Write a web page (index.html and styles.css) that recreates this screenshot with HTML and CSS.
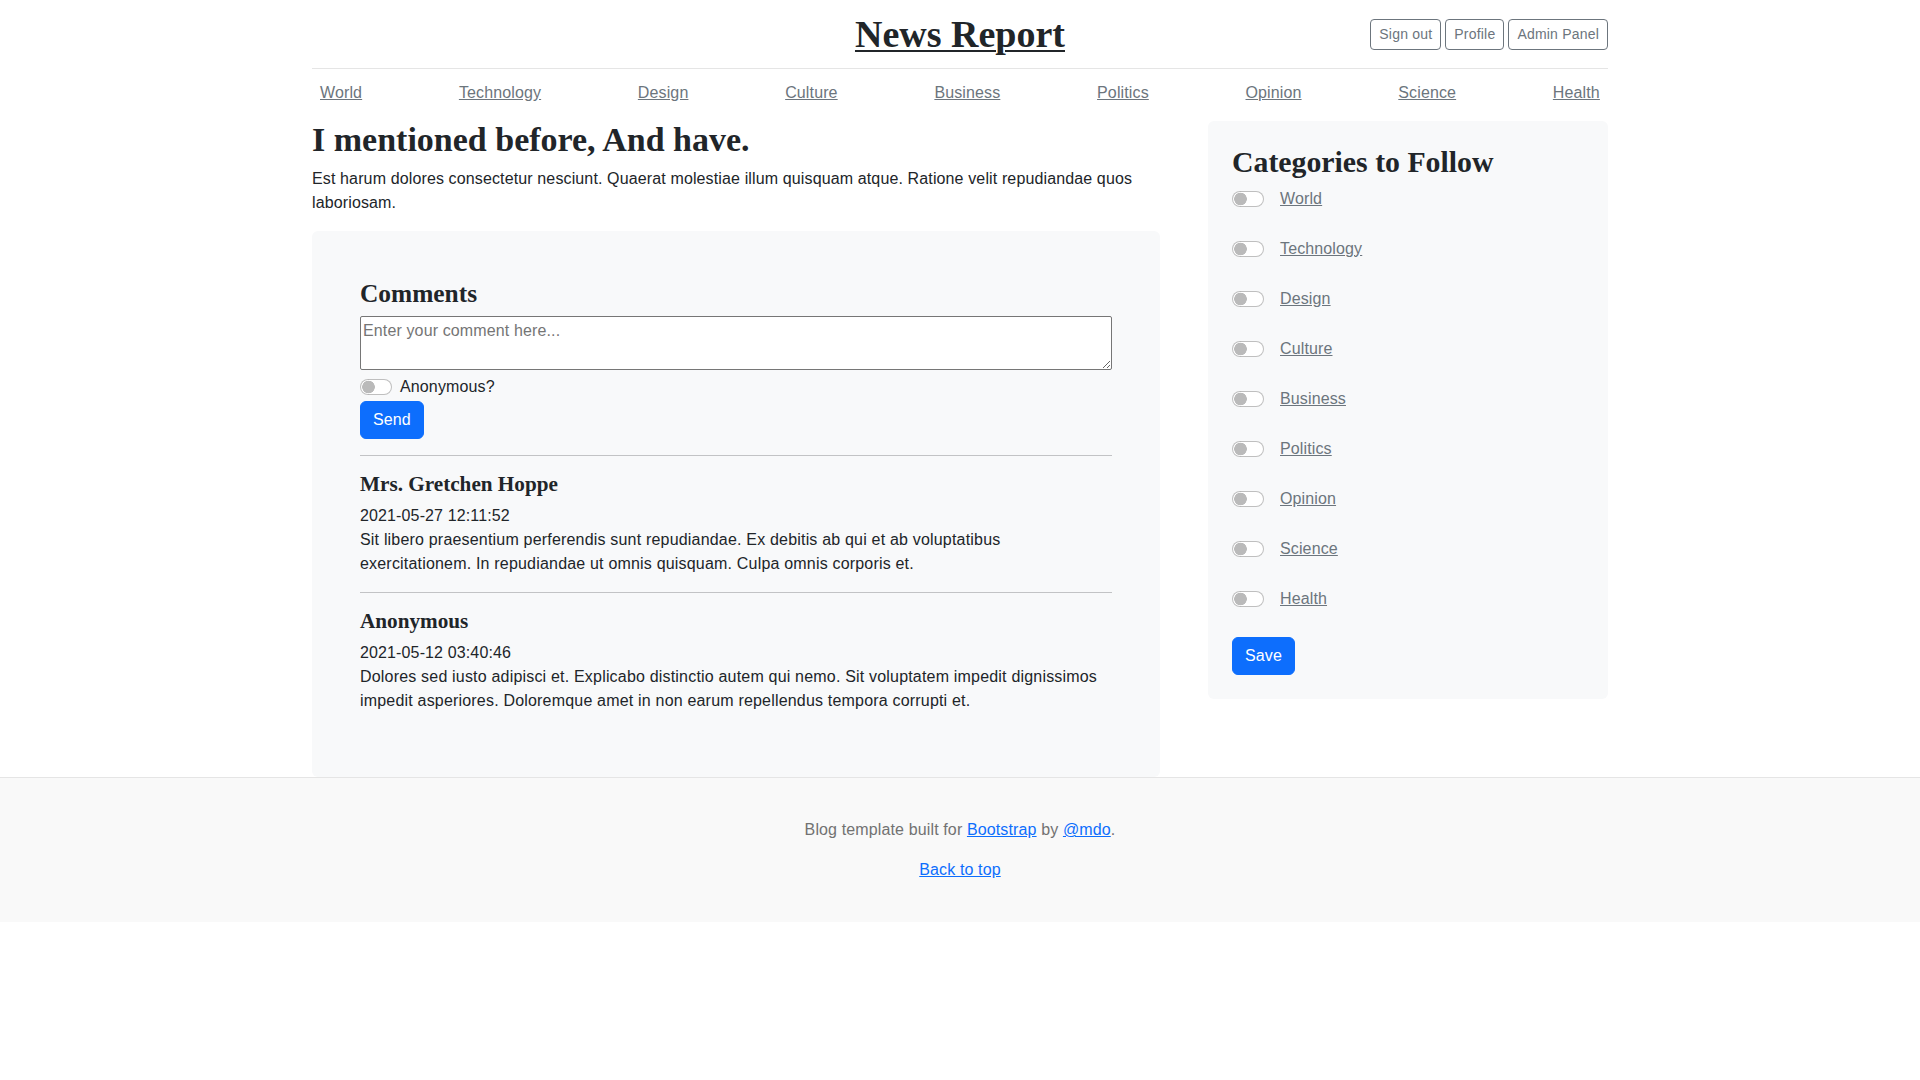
FILE: index.html
```html
<!DOCTYPE html>
<html lang="en">
<head>
<meta charset="utf-8">
<title>News Report</title>
<link rel="stylesheet" href="styles.css">
</head>
<body>
<div class="container">
  <header class="blog-header">
    <div class="header-row">
      <div class="header-side"></div>
      <div class="header-center"><a class="blog-logo" href="#">News Report</a></div>
      <div class="header-side header-actions">
        <a class="btn-sm" href="#">Sign out</a>
        <a class="btn-sm" href="#">Profile</a>
        <a class="btn-sm" href="#">Admin Panel</a>
      </div>
    </div>
  </header>

  <div class="nav-scroller">
    <nav class="nav">
      <a href="#">World</a>
      <a href="#">Technology</a>
      <a href="#">Design</a>
      <a href="#">Culture</a>
      <a href="#">Business</a>
      <a href="#">Politics</a>
      <a href="#">Opinion</a>
      <a href="#">Science</a>
      <a href="#">Health</a>
    </nav>
  </div>

  <div class="main-grid">
    <main class="main-col">
      <h2 class="post-title">I mentioned before, And have.</h2>
      <p class="post-body">Est harum dolores consectetur nesciunt. Quaerat molestiae illum quisquam atque. Ratione velit repudiandae quos laboriosam.</p>

      <section class="comments-box">
        <h4 class="comments-title">Comments</h4>
        <textarea class="comment-input" placeholder="Enter your comment here..."></textarea>
        <div class="switch-row anon-row">
          <input type="checkbox" class="switch" id="anon">
          <label for="anon">Anonymous?</label>
        </div>
        <button class="btn-primary" type="button">Send</button>

        <hr>
        <div class="comment">
          <h5 class="comment-author">Mrs. Gretchen Hoppe</h5>
          <div class="comment-date">2021-05-27 12:11:52</div>
          <p class="comment-text">Sit libero praesentium perferendis sunt repudiandae. Ex debitis ab qui et ab voluptatibus exercitationem. In repudiandae ut omnis quisquam. Culpa omnis corporis et.</p>
        </div>
        <hr>
        <div class="comment">
          <h5 class="comment-author">Anonymous</h5>
          <div class="comment-date">2021-05-12 03:40:46</div>
          <p class="comment-text">Dolores sed iusto adipisci et. Explicabo distinctio autem qui nemo. Sit voluptatem impedit dignissimos impedit asperiores. Doloremque amet in non earum repellendus tempora corrupti et.</p>
        </div>
      </section>
    </main>

    <aside class="sidebar">
      <h3 class="sidebar-title">Categories to Follow</h3>
      <form class="cat-form">
        <div class="switch-row cat-row"><input type="checkbox" class="switch" id="c1"><a href="#">World</a></div>
        <div class="switch-row cat-row"><input type="checkbox" class="switch" id="c2"><a href="#">Technology</a></div>
        <div class="switch-row cat-row"><input type="checkbox" class="switch" id="c3"><a href="#">Design</a></div>
        <div class="switch-row cat-row"><input type="checkbox" class="switch" id="c4"><a href="#">Culture</a></div>
        <div class="switch-row cat-row"><input type="checkbox" class="switch" id="c5"><a href="#">Business</a></div>
        <div class="switch-row cat-row"><input type="checkbox" class="switch" id="c6"><a href="#">Politics</a></div>
        <div class="switch-row cat-row"><input type="checkbox" class="switch" id="c7"><a href="#">Opinion</a></div>
        <div class="switch-row cat-row"><input type="checkbox" class="switch" id="c8"><a href="#">Science</a></div>
        <div class="switch-row cat-row"><input type="checkbox" class="switch" id="c9"><a href="#">Health</a></div>
        <button class="btn-primary" type="button">Save</button>
      </form>
    </aside>
  </div>
</div>

<footer class="blog-footer">
  <p class="footer-line">Blog template built for <a href="#">Bootstrap</a> by <a href="#">@mdo</a>.</p>
  <p class="footer-line last"><a href="#">Back to top</a></p>
</footer>
</body>
</html>
```
FILE: styles.css
```css
*, *::before, *::after {
  box-sizing: border-box;
}

body {
  margin: 0;
  font-family: "Liberation Sans", Arial, sans-serif;
  font-size: 16px;
  line-height: 1.5;
  letter-spacing: 0.13px;
  color: #212529;
  background: #fff;
}

.container {
  width: 1320px;
  margin: 0 auto;
  padding: 0 12px;
}

/* Header */
.blog-header {
  line-height: 1;
  border-bottom: 1px solid #e5e5e5;
  padding: 16px 0;
}

.header-row {
  display: grid;
  grid-template-columns: 1fr 1fr 1fr;
  align-items: center;
  height: 36px;
}

.header-center {
  text-align: center;
}

.blog-logo {
  font-family: "Liberation Serif", "Times New Roman", serif;
  font-weight: 700;
  font-size: 38px;
  line-height: 36px;
  letter-spacing: 0;
  color: #212529;
  text-decoration: underline;
  text-decoration-thickness: 2px;
  text-underline-offset: 3px;
}

.header-actions {
  display: flex;
  justify-content: flex-end;
  gap: 4px;
}

.btn-sm {
  display: inline-block;
  font-size: 14px;
  line-height: 21px;
  padding: 4px 8px;
  letter-spacing: 0.2px;
  border: 1px solid #6c757d;
  border-radius: 4px;
  color: #6c757d;
  text-decoration: none;
  background: transparent;
}

/* Nav */
.nav-scroller {
  height: 44px;
  overflow: hidden;
  margin-bottom: 8px;
}

.nav {
  display: flex;
  justify-content: space-between;
  padding: 4px 0;
}

.nav a {
  padding: 8px;
  line-height: 24px;
  color: #6c757d;
  text-decoration: underline;
}

/* Main layout */
.main-grid {
  display: grid;
  grid-template-columns: 848px 400px;
  column-gap: 48px;
  align-items: start;
}

.post-title {
  font-family: "Liberation Serif", "Times New Roman", serif;
  font-weight: 700;
  font-size: 34px;
  line-height: 38.4px;
  letter-spacing: 0;
  margin: 0 0 8px;
}

.post-body {
  margin: 0 0 16px;
}

.comments-box {
  background: #f8f9fa;
  border-radius: 6px;
  padding: 48px;
}

.comments-title {
  font-family: "Liberation Serif", "Times New Roman", serif;
  font-weight: 700;
  font-size: 25.4px;
  line-height: 28.8px;
  letter-spacing: 0;
  margin: 0 0 8px;
}

.comment-input {
  display: block;
  width: 100%;
  height: 54px;
  margin: 0 0 5px;
  padding: 2px;
  font: inherit;
  letter-spacing: inherit;
  color: #212529;
  background: #fff;
  border: 1px solid #767676;
  border-radius: 2px;
}

.comment-input::placeholder {
  color: #757575;
}

.switch-row {
  display: flex;
  align-items: center;
  height: 24px;
}

.anon-row {
  gap: 8px;
  margin-bottom: 2px;
}

.switch {
  appearance: none;
  -webkit-appearance: none;
  margin: 0;
  width: 32px;
  height: 16px;
  flex: 0 0 auto;
  border: 1px solid rgba(0, 0, 0, 0.25);
  border-radius: 16px;
  background-color: #fff;
  background-image: radial-gradient(circle at 7.5px 50%, rgba(0, 0, 0, 0.27) 6px, transparent 6.6px);
}

.btn-primary {
  display: inline-block;
  font-family: inherit;
  font-size: 16px;
  line-height: 24px;
  letter-spacing: inherit;
  padding: 6px 12px;
  color: #fff;
  background: #0d6efd;
  border: 1px solid #0d6efd;
  border-radius: 6px;
  cursor: pointer;
}

hr {
  border: 0;
  border-top: 1px solid #212529;
  opacity: 0.25;
  margin: 16px 0;
}

.comment-author {
  font-family: "Liberation Serif", "Times New Roman", serif;
  font-weight: 700;
  font-size: 21.2px;
  line-height: 24px;
  letter-spacing: 0;
  margin: 0 0 8px;
}

.comment-date {
  margin: 0;
}

.comment-text {
  margin: 0 0 16px;
  letter-spacing: 0.19px;
}

/* Sidebar */
.sidebar {
  background: #f8f9fa;
  border-radius: 6px;
  padding: 24px;
}

.sidebar-title {
  font-family: "Liberation Serif", "Times New Roman", serif;
  font-weight: 700;
  font-size: 29.8px;
  line-height: 33.6px;
  letter-spacing: 0;
  margin: 0 0 8px;
}

.cat-form {
  display: flex;
  flex-direction: column;
  align-items: flex-start;
  gap: 26px;
  margin: 0;
}

.cat-row {
  gap: 16px;
}

.cat-row a {
  color: #6c757d;
  text-decoration: underline;
}

/* Footer */
.blog-footer {
  padding: 40px 0;
  color: #727272;
  text-align: center;
  background: #f9f9f9;
  border-top: 1px solid #e5e5e5;
}

.footer-line {
  margin: 0 0 16px;
}

.footer-line.last {
  margin-bottom: 0;
}

.blog-footer a {
  color: #0d6efd;
  text-decoration: underline;
}
```
